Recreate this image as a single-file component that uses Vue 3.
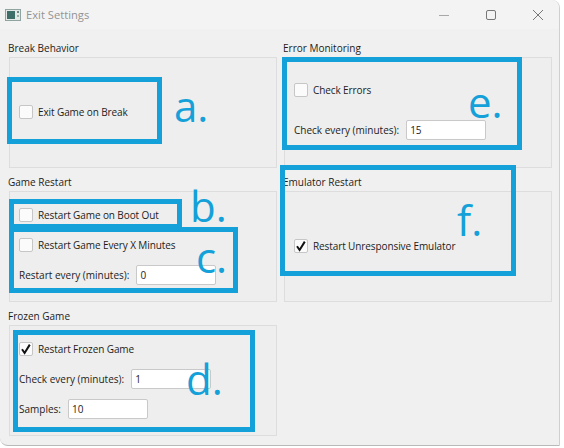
<script setup>
import { ref } from 'vue'

// settings shown in the dialog
const exitOnBreak = ref(false)
const restartOnBoot = ref(false)
const restartEveryX = ref(false)
const restartMinutes = ref('0')
const restartFrozen = ref(true)
const frozenMinutes = ref('1')
const frozenSamples = ref('10')
const checkErrors = ref(false)
const errorMinutes = ref('15')
const restartEmulator = ref(true)

// blue call-outs drawn on top of the dialog
const callouts = ['a', 'b', 'c', 'd', 'e', 'f']
</script>

<template>
  <div class="page">
    <div class="window">
      <header class="titlebar">
        <svg class="app-icon" width="16" height="12" viewBox="0 0 16 12">
          <rect x="0.5" y="0.5" width="15" height="11" fill="#e4e8e7" stroke="#8fa3a1" />
          <rect x="2" y="2" width="8" height="8" fill="#3f6d6a" />
          <rect x="12" y="2" width="2" height="2" fill="#6d8987" />
          <rect x="12" y="6" width="2" height="2" fill="#9aaeac" />
        </svg>
        <span class="title">Exit Settings</span>
        <div class="controls">
          <svg width="10" height="10" viewBox="0 0 10 10"><path d="M0 5.5H10" stroke="#a8a8a8" /></svg>
          <svg width="10" height="10" viewBox="0 0 10 10"><rect x="0.5" y="0.5" width="9" height="9" rx="1.5" fill="none" stroke="#777" /></svg>
          <svg width="10" height="10" viewBox="0 0 10 10"><path d="M0 0L10 10M10 0L0 10" stroke="#777" /></svg>
        </div>
      </header>

      <main class="groups">
        <section class="group">
          <h3>Break Behavior</h3>
          <div class="box single">
            <label class="row"><input type="checkbox" v-model="exitOnBreak" />Exit Game on Break</label>
          </div>
        </section>

        <section class="group">
          <h3>Error Monitoring</h3>
          <div class="box wide-gap">
            <label class="row"><input type="checkbox" v-model="checkErrors" />Check Errors</label>
            <label class="row field">Check every (minutes):<input type="text" v-model="errorMinutes" /></label>
          </div>
        </section>

        <section class="group">
          <h3>Game Restart</h3>
          <div class="box">
            <label class="row"><input type="checkbox" v-model="restartOnBoot" />Restart Game on Boot Out</label>
            <label class="row"><input type="checkbox" v-model="restartEveryX" />Restart Game Every X Minutes</label>
            <label class="row field">Restart every (minutes):<input type="text" v-model="restartMinutes" /></label>
          </div>
        </section>

        <section class="group">
          <h3>Emulator Restart</h3>
          <div class="box single">
            <label class="row"><input type="checkbox" v-model="restartEmulator" />Restart Unresponsive Emulator</label>
          </div>
        </section>

        <section class="group">
          <h3>Frozen Game</h3>
          <div class="box">
            <label class="row"><input type="checkbox" v-model="restartFrozen" />Restart Frozen Game</label>
            <label class="row field">Check every (minutes):<input type="text" v-model="frozenMinutes" /></label>
            <label class="row field">Samples:<input type="text" v-model="frozenSamples" /></label>
          </div>
        </section>
      </main>
    </div>

    <template v-for="c in callouts" :key="c">
      <div class="frame" :class="'frame-' + c"></div>
      <span class="letter" :class="'letter-' + c">{{ c }}.</span>
    </template>
  </div>
</template>

<style>
html,
body {
  margin: 0;
  background: #ffffff;
}
</style>

<style scoped>
.page {
  position: relative;
  width: 564px;
  height: 448px;
  overflow: hidden;
  font-family: "Open Sans", "Liberation Sans", sans-serif;
  font-size: 10px;
  color: #1c1c1c;
}

.window {
  width: 560px;
  height: 446px;
  box-sizing: border-box;
  background: #f0f0f0;
  border-right: 1px solid #cfcfcf;
  border-bottom: 1px solid #b9b9b9;
  border-radius: 0 8px 0 8px;
}

.titlebar {
  display: flex;
  align-items: center;
  height: 29px;
  padding-left: 5px;
  background: #f3f3f3;
  border-radius: 0 8px 0 0;
}

.app-icon {
  margin-right: 5px;
}

.title {
  color: #939393;
  font-size: 11.2px;
}

.controls {
  display: flex;
  gap: 37px;
  margin-left: auto;
  margin-right: 16px;
}

.groups {
  display: grid;
  grid-template-columns: 268px 268px;
  grid-auto-rows: 111px;
  column-gap: 7px;
  row-gap: 23px;
  padding: 28px 0 0 9px;
}

.group {
  position: relative;
  display: flex;
}

h3 {
  position: absolute;
  top: -16.5px;
  left: -1px;
  margin: 0;
  font-size: 10px;
  font-weight: 400;
  line-height: 14px;
}

.box {
  flex: 1;
  box-sizing: border-box;
  display: flex;
  flex-direction: column;
  justify-content: center;
  gap: 10px;
  padding: 0 9px 4px;
  background: #eeeeee;
  border: 1px solid #dddddd;
}

.single {
  padding-bottom: 1px;
}

.wide-gap {
  gap: 20px;
  padding-bottom: 5px;
}

.row {
  display: flex;
  align-items: center;
  height: 20px;
  letter-spacing: -0.1px;
}

.row.field {
  letter-spacing: 0;
}

.row input[type="checkbox"] {
  appearance: none;
  flex: none;
  box-sizing: border-box;
  width: 14px;
  height: 14px;
  margin: 0 5px 0 0;
  background: #fbfbfb;
  border: 1px solid #c6c6c6;
  border-radius: 2px;
}

.row input[type="checkbox"]:checked {
  background: #fbfbfb url("data:image/svg+xml,%3Csvg xmlns='http://www.w3.org/2000/svg' viewBox='0 0 14 14'%3E%3Cpath d='M3 7.2L5.6 11L10.8 2.6' fill='none' stroke='%23111' stroke-width='2'/%3E%3C/svg%3E") center / 14px no-repeat;
}

.field input {
  box-sizing: border-box;
  width: 80px;
  height: 20px;
  margin-left: 7px;
  padding: 0 3px;
  font: inherit;
  color: inherit;
  background: #ffffff;
  border: 1px solid #c9c9c9;
  border-radius: 2px;
  outline: none;
}

.frame {
  position: absolute;
  box-sizing: border-box;
  border: 5px solid #14a0d8;
}

.frame-a { left: 7px; top: 77px; width: 155px; height: 67px; }
.frame-b { left: 9px; top: 199px; width: 173px; height: 30px; }
.frame-c { left: 9px; top: 227px; width: 229px; height: 66px; }
.frame-d { left: 13px; top: 330px; width: 242px; height: 102px; }
.frame-e { left: 282px; top: 57px; width: 240px; height: 93px; }
.frame-f { left: 280px; top: 165px; width: 236px; height: 111px; }

.letter {
  position: absolute;
  color: #14a0d8;
  font-family: "Open Sans", sans-serif;
  font-size: 42px;
  line-height: 30px;
}

.letter-a { left: 174px; top: 91px; }
.letter-b { left: 190px; top: 191px; }
.letter-c { left: 196px; top: 242px; }
.letter-d { left: 186px; top: 364px; }
.letter-e { left: 468px; top: 87px; }
.letter-f { left: 457px; top: 205px; }
</style>
